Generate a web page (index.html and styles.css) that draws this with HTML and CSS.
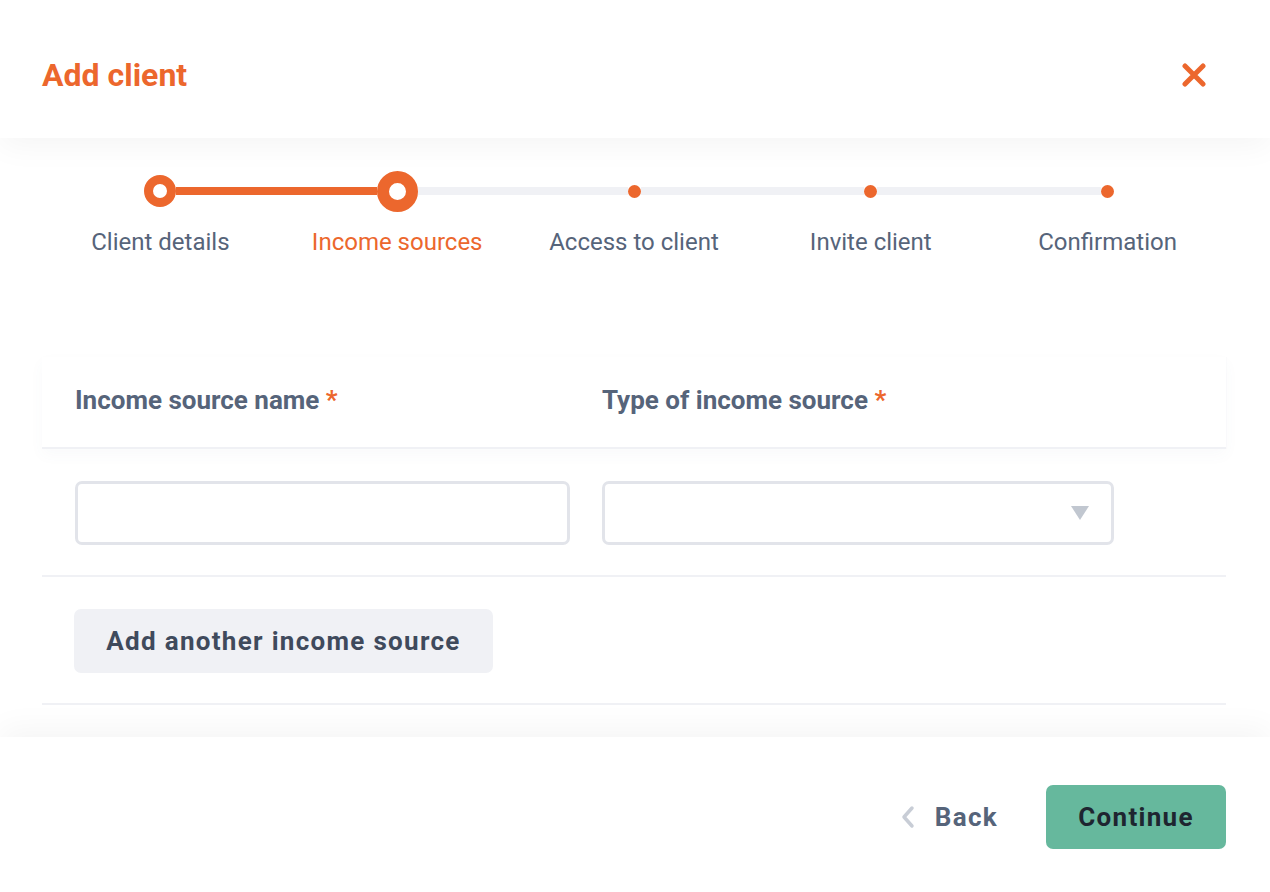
FILE: index.html
```html
<!DOCTYPE html>
<html lang="en">
<head>
<meta charset="utf-8">
<title>Add client</title>
<link rel="stylesheet" href="styles.css">
</head>
<body>
<div class="modal">
  <header class="modal-header">
    <h1 class="title">Add client</h1>
    <button class="close" aria-label="Close">
      <svg width="24" height="24" viewBox="0 0 24 24"><path d="M3 3 L21 21 M21 3 L3 21" stroke="#EC672D" stroke-width="5" stroke-linecap="round" fill="none"/></svg>
    </button>
  </header>

  <main class="modal-body">
    <ol class="stepper">
      <li class="step done">
        <div class="node"><span class="seg seg-none"></span><span class="dot dot-done"></span><span class="seg seg-on"></span></div>
        <span class="label">Client details</span>
      </li>
      <li class="step current">
        <div class="node"><span class="seg seg-on"></span><span class="dot dot-current"></span><span class="seg"></span></div>
        <span class="label label-current">Income sources</span>
      </li>
      <li class="step">
        <div class="node"><span class="seg"></span><span class="dot"></span><span class="seg"></span></div>
        <span class="label">Access to client</span>
      </li>
      <li class="step">
        <div class="node"><span class="seg"></span><span class="dot"></span><span class="seg"></span></div>
        <span class="label">Invite client</span>
      </li>
      <li class="step">
        <div class="node"><span class="seg"></span><span class="dot"></span><span class="seg seg-none"></span></div>
        <span class="label">Confirmation</span>
      </li>
    </ol>

    <section class="table">
      <div class="row head-row">
        <div class="th">Income source name <span class="req">*</span></div>
        <div class="th">Type of income source <span class="req">*</span></div>
      </div>
      <div class="row input-row">
        <input class="field" type="text">
        <div class="field select"><span class="caret"></span></div>
      </div>
      <div class="add-row">
        <button class="btn-add">Add another income source</button>
      </div>
    </section>
  </main>

  <footer class="modal-footer">
    <button class="btn-back">
      <svg width="14" height="24" viewBox="0 0 14 24"><path d="M11 3 L3 12 L11 21" stroke="#C8CDD6" stroke-width="3.5" stroke-linecap="round" stroke-linejoin="round" fill="none"/></svg>
      <span>Back</span>
    </button>
    <button class="btn-continue">Continue</button>
  </footer>
</div>
</body>
</html>
```

FILE: styles.css
```css
* { box-sizing: border-box; }

html, body {
  margin: 0;
  padding: 0;
  background: #ffffff;
}

body {
  font-family: Roboto, "Liberation Sans", Arial, sans-serif;
  color: #56647A;
}

.modal {
  width: 1270px;
  height: 892px;
  display: flex;
  flex-direction: column;
  overflow: hidden;
}

.modal-header {
  height: 138px;
  flex: none;
  display: flex;
  align-items: center;
  justify-content: space-between;
  padding: 12px 64px 0 42px;
  background: #fff;
  position: relative;
  z-index: 2;
  box-shadow: 0 8px 30px rgba(0, 0, 0, 0.045);
}

.title {
  margin: 0;
  font-size: 32px;
  font-weight: 700;
  color: #EC672D;
  letter-spacing: 0;
}

.close {
  border: 0;
  background: none;
  padding: 0;
  width: 24px;
  height: 24px;
  display: flex;
  cursor: pointer;
}

.modal-body {
  flex: 1;
  padding: 33px 44px 0 42px;
  background: #fff;
}

/* stepper */
.stepper {
  list-style: none;
  margin: 0;
  padding: 0;
  display: grid;
  grid-template-columns: repeat(5, 1fr);
}

.step {
  display: flex;
  flex-direction: column;
  align-items: center;
}

.node {
  width: 100%;
  height: 40px;
  display: flex;
  align-items: center;
}

.seg {
  flex: 1;
  height: 8px;
  background: #F0F1F5;
}
.seg-on { background: #EC672D; }
.seg-none { background: transparent; }

.dot {
  flex: none;
  width: 13px;
  height: 13px;
  border-radius: 50%;
  background: #EC672D;
}
.dot-done {
  width: 32px;
  height: 32px;
  border: 9px solid #EC672D;
  background: #fff;
}
.dot-current {
  width: 41px;
  height: 41px;
  border: 12px solid #EC672D;
  background: #fff;
}

.label {
  margin-top: 16px;
  font-size: 24px;
  line-height: 30px;
  color: #56647A;
  white-space: nowrap;
}
.label-current { color: #EC672D; }

/* table */
.table {
  margin-top: 100px;
}

.row {
  display: grid;
  grid-template-columns: 495px 512px;
  column-gap: 32px;
  padding-left: 33px;
}

.head-row {
  height: 92px;
  align-items: center;
  border-bottom: 2px solid #F0F1F5;
  box-shadow: 0 6px 14px rgba(90, 100, 130, 0.035), 1px 0 0 rgba(90, 100, 130, 0.02);
  position: relative;
  z-index: 1;
}

.th {
  font-size: 26px;
  font-weight: 700;
  color: #56647A;
  white-space: nowrap;
  padding-bottom: 4px;
}

.req { color: #EC672D; }

.input-row {
  padding-top: 32px;
  padding-bottom: 30px;
  border-bottom: 2px solid #F0F1F5;
}

.field {
  height: 64px;
  border: 3px solid #E2E4EA;
  border-radius: 7px;
  background: #fff;
  margin: 0;
  font: inherit;
}

.select {
  display: flex;
  align-items: center;
  justify-content: flex-end;
  padding-right: 22px;
}

.caret {
  width: 0;
  height: 0;
  border-left: 9px solid transparent;
  border-right: 9px solid transparent;
  border-top: 14px solid #C1C7D0;
}

.add-row {
  padding: 32px 0 30px 32px;
  border-bottom: 2px solid #F0F1F5;
}

.btn-add {
  height: 64px;
  width: 419px;
  border: 0;
  border-radius: 7px;
  background: #F0F1F5;
  font-family: inherit;
  font-size: 26px;
  font-weight: 700;
  letter-spacing: 1.3px;
  color: #3F4A5C;
  cursor: pointer;
}

/* footer */
.modal-footer {
  height: 155px;
  flex: none;
  display: flex;
  justify-content: flex-end;
  align-items: flex-start;
  padding: 48px 44px 0 0;
  gap: 48px;
  background: #fff;
  position: relative;
  z-index: 2;
  box-shadow: 0 -8px 30px rgba(0, 0, 0, 0.045);
}

.btn-back {
  height: 64px;
  border: 0;
  background: none;
  display: flex;
  align-items: center;
  gap: 20px;
  padding: 0;
  font-family: inherit;
  font-size: 26px;
  font-weight: 700;
  letter-spacing: 1.3px;
  color: #56647A;
  cursor: pointer;
}

.btn-continue {
  height: 64px;
  width: 180px;
  border: 0;
  border-radius: 7px;
  background: #66B89D;
  font-family: inherit;
  font-size: 26px;
  font-weight: 700;
  letter-spacing: 1.3px;
  color: #1E2530;
  cursor: pointer;
}
```
